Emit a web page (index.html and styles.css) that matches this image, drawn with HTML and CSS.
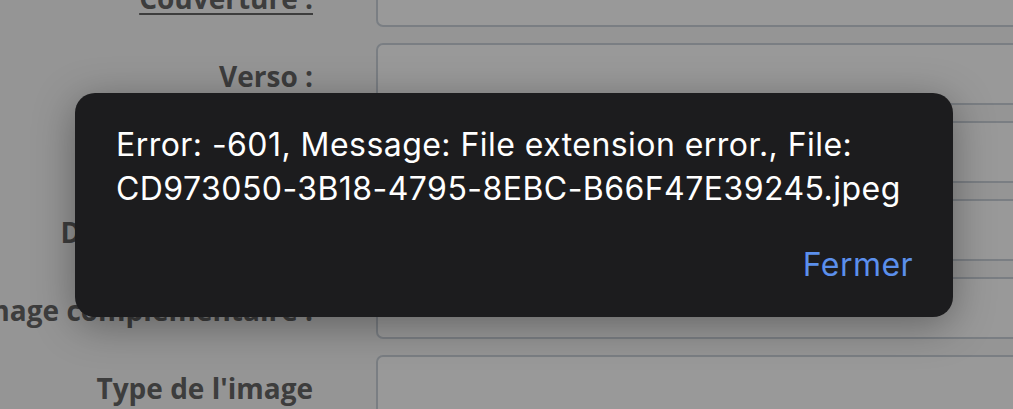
FILE: index.html
```html
<!DOCTYPE html>
<html lang="fr">
<head>
<meta charset="utf-8">
<title>Erreur</title>
<link rel="stylesheet" href="styles.css">
</head>
<body>
<div class="page">
  <form class="form">
    <div class="row">
      <div class="label"><span class="u">Couverture :</span></div>
      <div class="field"></div>
    </div>
    <div class="row">
      <div class="label">Verso :</div>
      <div class="field"></div>
    </div>
    <div class="row">
      <div class="label">Dos :</div>
      <div class="field"></div>
    </div>
    <div class="row">
      <div class="label">Date de parution :</div>
      <div class="field"></div>
    </div>
    <div class="row">
      <div class="label">Image complémentaire :</div>
      <div class="field"></div>
    </div>
    <div class="row">
      <div class="label">Type de l'image</div>
      <div class="field"></div>
    </div>
  </form>
</div>
<div class="overlay">
  <div class="dialog" role="alertdialog">
    <p class="message"><span class="line">Error: -601, Message: File extension error., File:</span> <span class="line">CD973050-3B18-4795-8EBC-B66F47E39245.jpeg</span></p>
    <div class="actions">
      <button class="btn" type="button">Fermer</button>
    </div>
  </div>
</div>
</body>
</html>
```

FILE: styles.css
```css
html, body {
  margin: 0;
  padding: 0;
}
body {
  width: 1013px;
  height: 409px;
  overflow: hidden;
  background: #f9f9f9;
  font-family: "Open Sans", "Liberation Sans", sans-serif;
  position: relative;
}
.page {
  width: 1013px;
  height: 409px;
  overflow: hidden;
}
.form {
  margin: -35px 0 0 0;
  display: flex;
  flex-direction: column;
  gap: 16px;
}
.row {
  display: grid;
  grid-template-columns: 313px 700px;
  column-gap: 63px;
  align-items: center;
  height: 62px;
}
.label {
  display: flex;
  justify-content: flex-end;
  white-space: nowrap;
  font-weight: 700;
  font-size: 28px;
  color: #666;
  line-height: 36px;
  padding-top: 4px;
}
.u {
  text-decoration: underline;
  text-underline-offset: 4px;
  text-decoration-thickness: 2px;
}
.field {
  height: 62px;
  box-sizing: border-box;
  background: #fff;
  border: 2px solid #cbd3db;
  border-radius: 7px;
}
.overlay {
  position: absolute;
  inset: 0;
  background: rgba(0, 0, 0, 0.4);
}
.dialog {
  position: absolute;
  left: 75px;
  top: 93px;
  width: 878px;
  height: 224px;
  box-sizing: border-box;
  background: #1c1c1e;
  border-radius: 20px;
  box-shadow: 0 8px 40px rgba(0, 0, 0, 0.35);
  padding: 30px 40px 0 41px;
  font-family: Inter, "Noto Sans", sans-serif;
}
.message {
  margin: 0;
  color: #fff;
  font-size: 32px;
  letter-spacing: 0.45px;
  line-height: 44px;
}
.line {
  display: block;
  white-space: nowrap;
}
.actions {
  display: flex;
  justify-content: flex-end;
  margin-top: 32px;
}
.btn {
  background: none;
  border: 0;
  padding: 0;
  font-family: Inter, "Noto Sans", sans-serif;
  font-size: 32px;
  letter-spacing: 0.45px;
  line-height: 44px;
  color: #5b8fec;
}
```
